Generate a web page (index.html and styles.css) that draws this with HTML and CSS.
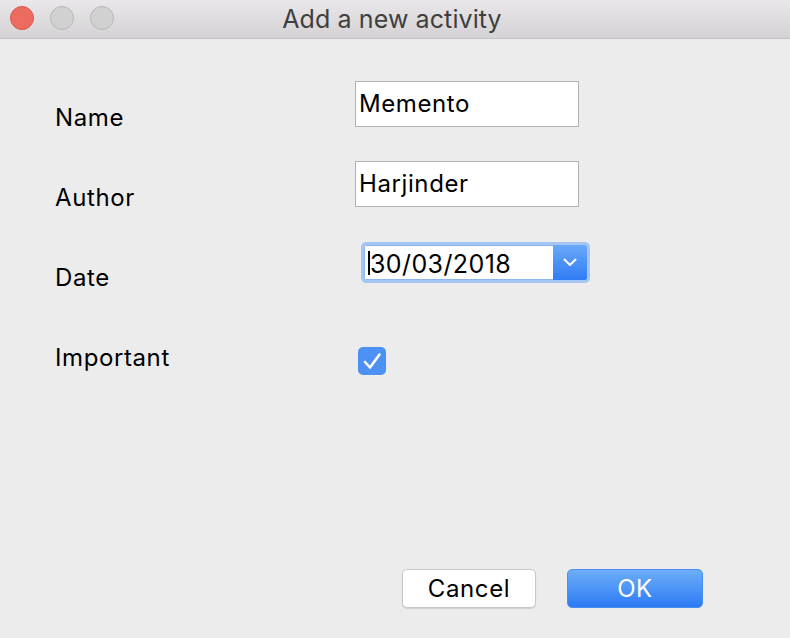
FILE: index.html
```html
<!DOCTYPE html>
<html>
<head>
<meta charset="utf-8">
<link rel="stylesheet" href="styles.css">
</head>
<body>
<div class="window">
  <header class="titlebar">
    <div class="lights">
      <span class="light red"></span>
      <span class="light grey"></span>
      <span class="light grey"></span>
    </div>
    <div class="title">Add a new activity</div>
    <div class="spacer"></div>
  </header>
  <main class="content">
    <div class="form">
      <div class="label">Name</div>
      <div class="cell"><div class="field">Memento</div></div>
      <div class="label">Author</div>
      <div class="cell"><div class="field">Harjinder</div></div>
      <div class="label">Date</div>
      <div class="cell cell-date">
        <div class="combo">
          <div class="combo-field"><span class="caret"></span>30/03/2018</div>
          <div class="combo-btn">
            <svg width="14" height="9" viewBox="0 0 14 9"><path d="M1.5 1.5 L7 7 L12.5 1.5" fill="none" stroke="#fff" stroke-width="2" stroke-linecap="round" stroke-linejoin="round"/></svg>
          </div>
        </div>
      </div>
      <div class="label">Important</div>
      <div class="cell cell-check">
        <div class="checkbox">
          <svg width="28" height="28" viewBox="0 0 28 28"><path d="M7 15 L12 20.5 L21.5 7.5" fill="none" stroke="#fff" stroke-width="2.6" stroke-linecap="round" stroke-linejoin="round"/></svg>
        </div>
      </div>
    </div>
    <div class="footer">
      <button class="btn btn-cancel">Cancel</button>
      <button class="btn btn-ok">OK</button>
    </div>
  </main>
</div>
</body>
</html>
```

FILE: styles.css
```css
html, body {
  margin: 0;
  padding: 0;
}
body {
  font-family: Inter, "Liberation Sans", sans-serif;
  background: #ececec;
  width: 790px;
  height: 638px;
  overflow: hidden;
}
.window {
  display: flex;
  flex-direction: column;
  width: 790px;
  height: 638px;
}
.titlebar {
  height: 38px;
  border-bottom: 1px solid #c4c2c4;
  background: linear-gradient(#e9e7e9, #d4d2d4);
  display: grid;
  grid-template-columns: 1fr auto 1fr;
  align-items: center;
}
.lights {
  display: flex;
  gap: 16px;
  padding-left: 10px;
  align-items: center;
  margin-top: -2px;
}
.light {
  width: 22px;
  height: 22px;
  border-radius: 50%;
  box-sizing: content-box;
}
.red {
  background: #ee6b60;
  border: 1px solid #d5554b;
}
.grey {
  background: #d2d1d2;
  border: 1px solid #b9b8b9;
}
.title {
  font-size: 25px;
  line-height: 38px;
  color: #3f3f3f;
  margin-left: -6px;
  letter-spacing: 0.1px;
}
.content {
  flex: 1;
  display: flex;
  flex-direction: column;
}
.form {
  flex: 1;
  display: grid;
  grid-template-columns: 300px 240px;
  grid-auto-rows: 80px;
  align-content: start;
  padding: 42px 0 0 55px;
}
.label {
  font-size: 24px;
  line-height: 30px;
  letter-spacing: 0.6px;
  color: #000;
  padding-top: 22px;
}
.cell {
  display: flex;
  align-items: flex-start;
}
.field {
  border: 1px solid #b1b1b1;
  background: #fff;
  font-size: 24px;
  line-height: 30px;
  letter-spacing: 0.6px;
  padding: 7px 0 0 3px;
  box-sizing: border-box;
  height: 46px;
  width: 224px;
  color: #000;
}
.cell-date {
  padding: 1px 0 0 6px;
}
.combo {
  display: flex;
  width: 229px;
  height: 41px;
  box-sizing: border-box;
  border-radius: 5px;
  border: 3px solid #a5c6f3;
  background: #fff;
  overflow: hidden;
}
.combo-field {
  flex: 1;
  display: flex;
  align-items: center;
  font-size: 25px;
  line-height: 30px;
  letter-spacing: 0.4px;
  padding-left: 3px;
  padding-top: 2px;
  color: #000;
  border: 1px solid #8fb4e8;
  border-right: none;
}
.caret {
  width: 2px;
  height: 24px;
  background: #000;
  margin-top: -1px;
}
.combo-btn {
  width: 34px;
  display: flex;
  align-items: center;
  justify-content: center;
  background: linear-gradient(#6aa8f8, #2f7cf5);
}
.cell-check {
  padding: 26px 0 0 3px;
}
.checkbox {
  width: 28px;
  height: 28px;
  border-radius: 5px;
  background: #4c91f3;
  display: flex;
}
.footer {
  display: flex;
  justify-content: flex-end;
  gap: 31px;
  padding: 0 87px 30px 0;
}
.btn {
  height: 39px;
  border-radius: 5px;
  font-family: Inter, "Liberation Sans", sans-serif;
  font-size: 24px;
  letter-spacing: 0.6px;
  padding: 0;
}
.btn-cancel {
  width: 134px;
  background: #fff;
  color: #000;
  border: 1px solid #c8c8c8;
  box-shadow: 0 1px 1px rgba(0,0,0,0.12);
}
.btn-ok {
  width: 136px;
  background: linear-gradient(#6caef8, #2d7af5);
  color: #fff;
  border: 1px solid #4a8ef0;
}
```
